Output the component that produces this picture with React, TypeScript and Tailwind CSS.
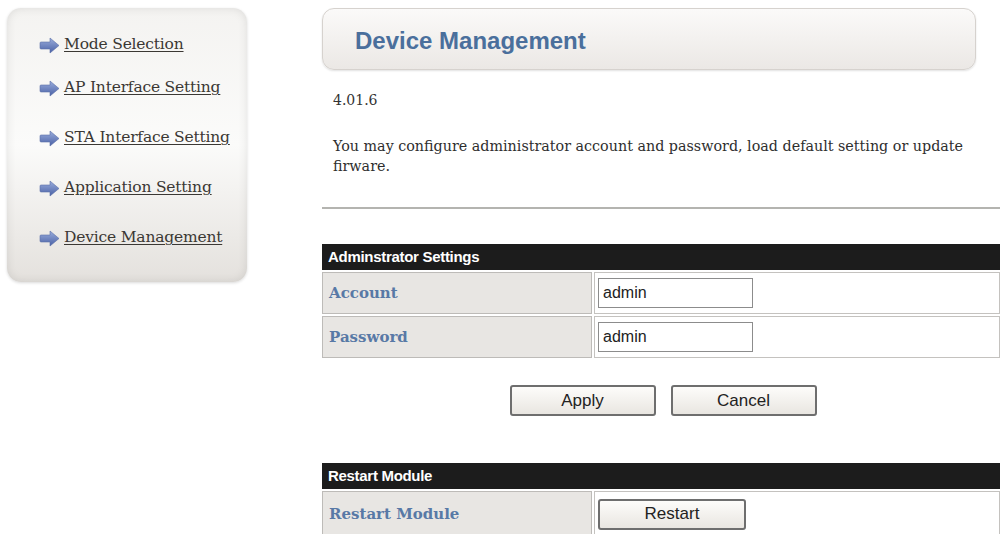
import React from 'react';

const serif = 'font-["DejaVu_Serif","Liberation_Serif",serif]';
const sans = 'font-["Liberation_Sans",Arial,sans-serif]';

const Arrow = () => (
  <svg width="21" height="17" viewBox="0 0 21 17" className="shrink-0">
    <defs>
      <linearGradient id="arrowFill" x1="0" y1="0" x2="0" y2="1">
        <stop offset="0" stopColor="#9aaddc" />
        <stop offset="1" stopColor="#4a61a6" />
      </linearGradient>
    </defs>
    <path d="M1 6 Q1 5 2 5 L11 5 L11 1 L20 8.5 L11 16 L11 12 L2 12 Q1 12 1 11 Z" fill="url(#arrowFill)" stroke="#5a6fa8" strokeWidth="0.6" />
  </svg>
);

const NavItem = ({ label, className }: { label: string; className: string }) => (
  <div className={`flex items-center gap-[4px] ${className}`}>
    <Arrow />
    <a href="#" className={`${serif} text-[15.5px] tracking-[-0.2px] text-[#3b3834] underline underline-offset-2 decoration-1`}>
      {label}
    </a>
  </div>
);

const Button = ({ label, className = '' }: { label: string; className?: string }) => (
  <button className={`${sans} h-[31px] w-[146px] rounded-[3px] border-2 border-[#6e6e6e] bg-gradient-to-b from-[#fdfcfa] to-[#e9e6e1] text-[17px] text-[#222] ${className}`}>
    {label}
  </button>
);

const SectionHeader = ({ title }: { title: string }) => (
  <div className={`${sans} flex h-[26px] items-center bg-[#1c1c1c] pl-[6px] text-[15px] font-bold tracking-[-0.3px] text-white`}>
    {title}
  </div>
);

const Row = ({ label, children, height }: { label: string; children: React.ReactNode; height: string }) => (
  <div className={`mt-[2px] flex gap-[2px] ${height}`}>
    <div className={`${serif} flex w-[270px] items-center border border-[#bdbbb8] bg-[#e8e6e3] pl-[6px] text-[15px] font-bold text-[#5879a6]`}>
      {label}
    </div>
    <div className="flex flex-1 items-center border border-[#c4c2bf] bg-white pl-[3px]">{children}</div>
  </div>
);

const Field = ({ value }: { value: string }) => (
  <input
    defaultValue={value}
    className={`${sans} h-[30px] w-[155px] border border-[#8c8c8c] bg-white pl-[4px] text-[16px] text-[#222] outline-none`}
  />
);

export default function App() {
  return (
    <div className="flex h-[534px] w-[1000px] items-start overflow-hidden bg-white">
      <aside className="ml-[7px] mt-[8px] flex h-[274px] w-[240px] shrink-0 flex-col rounded-[14px] bg-gradient-to-b from-[#f4f3f1] via-[#fbfbfa] to-[#e4e1dd] pl-[32px] pt-[27px] shadow-[inset_0_0_10px_rgba(0,0,0,0.10),0_1px_3px_rgba(0,0,0,0.15)]">
        <NavItem label="Mode Selection" className="h-[20px]" />
        <NavItem label="AP Interface Setting" className="mt-[23px] h-[20px]" />
        <NavItem label="STA Interface Setting" className="mt-[30px] h-[20px]" />
        <NavItem label="Application Setting" className="mt-[30px] h-[20px]" />
        <NavItem label="Device Management" className="mt-[30px] h-[20px]" />
      </aside>

      <main className="ml-[75px] flex-1">
        <div className="mt-[8px] flex h-[62px] w-[654px] items-center rounded-[12px] border border-[#d6d2ce] bg-gradient-to-b from-[#fbfaf9] to-[#ebe8e5] pl-[32px] pt-[4px] shadow-[0_1px_2px_rgba(0,0,0,0.12)]">
          <h1 className={`${sans} text-[24px] font-bold text-[#4a6f9c]`}>Device Management</h1>
        </div>

        <p className={`${serif} mt-[20px] pl-[11px] text-[14px] leading-[21px] text-[#333]`}>4.01.6</p>

        <p className={`${serif} mt-[25px] w-[660px] pl-[11px] text-[14.3px] leading-[20px] text-[#2e2e2e]`}>
          You may configure administrator account and password, load default setting or update firware.
        </p>

        <div className="mt-[31px] border-t-2 border-[#b4b4b0]" />

        <section className="mt-[35px]">
          <SectionHeader title="Adminstrator Settings" />
          <Row label="Account" height="h-[42px]">
            <Field value="admin" />
          </Row>
          <Row label="Password" height="h-[42px]">
            <Field value="admin" />
          </Row>
        </section>

        <div className="mt-[27px] flex justify-center gap-[15px] pl-[4px]">
          <Button label="Apply" />
          <Button label="Cancel" />
        </div>

        <section className="mt-[47px]">
          <SectionHeader title="Restart Module" />
          <Row label="Restart Module" height="h-[46px]">
            <Button label="Restart" className="w-[148px]" />
          </Row>
        </section>
      </main>
    </div>
  );
}
